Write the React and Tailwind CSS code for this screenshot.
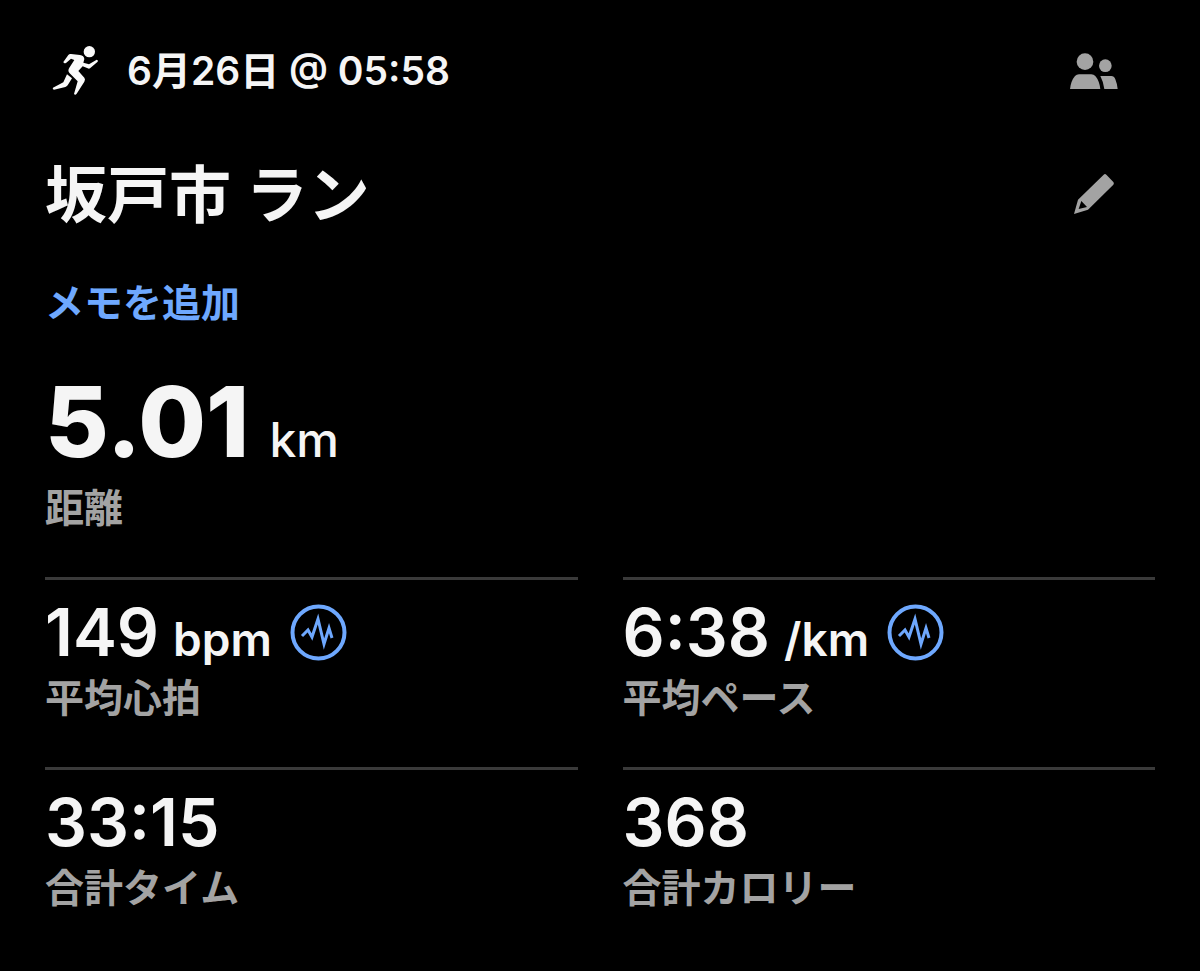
function RunnerIcon() {
  return (
    <svg className="h-[50px] w-[50px] shrink-0" viewBox="27 33 150 150" fill="#fafafa" aria-hidden="true">
      <circle cx="148" cy="50" r="17" />
      <path d="M70 81 L85 60 Q88 56 93 57 L120 60 Q132 62 133 72 L130 83 L147 88 L170 74 Q176 75 173 80 L150 100 Q147 102 143 100 L128 94 L115 108 L133 128 Q137 133 133 140 L110 176 Q106 182 102 177 L113 139 L89 115 Q82 107 88 98 L103 75 L93 71 L78 84 Q72 87 70 81 Z" />
      <path d="M81 118 L96 130 L83 151 Q80 155 76 156 L42 164 Q36 162 39 158 L70 142 Z" />
    </svg>
  );
}

function PeopleIcon() {
  return (
    <svg className="h-9 w-12" viewBox="45 38 144 108" fill="#a3a3a3" aria-hidden="true">
      <circle cx="90" cy="64" r="25" />
      <path d="M45 146 Q48 121 60 107 Q65 102 72 102 H109 Q116 102 121 107 Q133 121 136 146 Z" />
      <circle cx="151" cy="76" r="19" />
      <path d="M136 107 H169 Q177 107 181 117 Q186 129 188 146 H148 Q145 124 136 107 Z" />
    </svg>
  );
}

function PencilIcon() {
  return (
    <svg className="h-10 w-10" viewBox="40 40 120 120" fill="#a3a3a3" aria-hidden="true">
      <path
        fillRule="evenodd"
        d="M129 42 Q133 38 137 42 L158 64 Q161 68 158 72 L82 147 L40 160 L52 117 Z M62 121 L54 145 L79 139 Z"
      />
    </svg>
  );
}

function PulseIcon() {
  return (
    <svg
      className="h-[57px] w-[57px]"
      viewBox="0 0 57 57"
      fill="none"
      stroke="#6ea8fe"
      strokeWidth="4"
      aria-hidden="true"
    >
      <circle cx="28.5" cy="28.5" r="26" />
      <path d="M12 32 L18 26 L22 33 L28 15 L34 40 L39 24 L42 34" strokeWidth="3" />
    </svg>
  );
}

const stats = [
  { value: "149", unit: "bpm", label: "平均心拍", chart: true },
  { value: "6:38", unit: "/km", label: "平均ペース", chart: true },
  { value: "33:15", label: "合計タイム" },
  { value: "368", label: "合計カロリー" },
];

function Stat({ value, unit, label, chart }) {
  return (
    <div className="border-t-[3px] border-[#3a3a3a] pt-[18px] pb-[45px]">
      <div className="flex h-[68px] items-start">
        <p className="flex items-baseline gap-[14px]">
          <span className="text-[66px] leading-[68px] font-semibold">{value}</span>
          {unit && <span className="text-[46px] leading-none font-semibold">{unit}</span>}
        </p>
        {chart && (
          <button type="button" className="mt-[6px] ml-[18px]" aria-label={`${label}のグラフ`}>
            <PulseIcon />
          </button>
        )}
      </div>
      <p className="mt-2 text-[39px] leading-[48px] font-semibold text-[#a3a3a3]">{label}</p>
    </div>
  );
}

export default function App() {
  return (
    <main className="min-h-screen bg-black px-[45px] pt-[46px] font-['Inter','Noto_Sans_CJK_JP',sans-serif] text-[#f5f5f5]">
      <header className="flex items-center justify-between pr-[37px]">
        <div className="flex items-center gap-7 pl-1">
          <RunnerIcon />
          <p className="text-[39px] leading-[50px] font-semibold">6月26日 @ 05:58</p>
        </div>
        <button type="button" aria-label="友達">
          <PeopleIcon />
        </button>
      </header>
      <div className="mt-[60px] flex items-center justify-between pr-[41px]">
        <h1 className="text-[62px] leading-[80px] font-bold">坂戸市 ラン</h1>
        <button type="button" className="pb-1" aria-label="編集">
          <PencilIcon />
        </button>
      </div>
      <a href="#memo" className="mt-[42px] block text-[39px] leading-[50px] font-semibold text-[#6ea8fe]">
        メモを追加
      </a>
      <section className="mt-[44px]">
        <p className="flex items-baseline gap-5">
          <span className="text-[98px] leading-[100px] font-extrabold">5.01</span>
          <span className="text-[48px] leading-none font-medium">km</span>
        </p>
        <p className="mt-3 text-[39px] leading-[48px] font-semibold text-[#a3a3a3]">距離</p>
      </section>
      <section className="mt-[45px] grid grid-cols-2 gap-x-[45px]">
        {stats.map((stat) => (
          <Stat key={stat.label} {...stat} />
        ))}
      </section>
    </main>
  );
}
